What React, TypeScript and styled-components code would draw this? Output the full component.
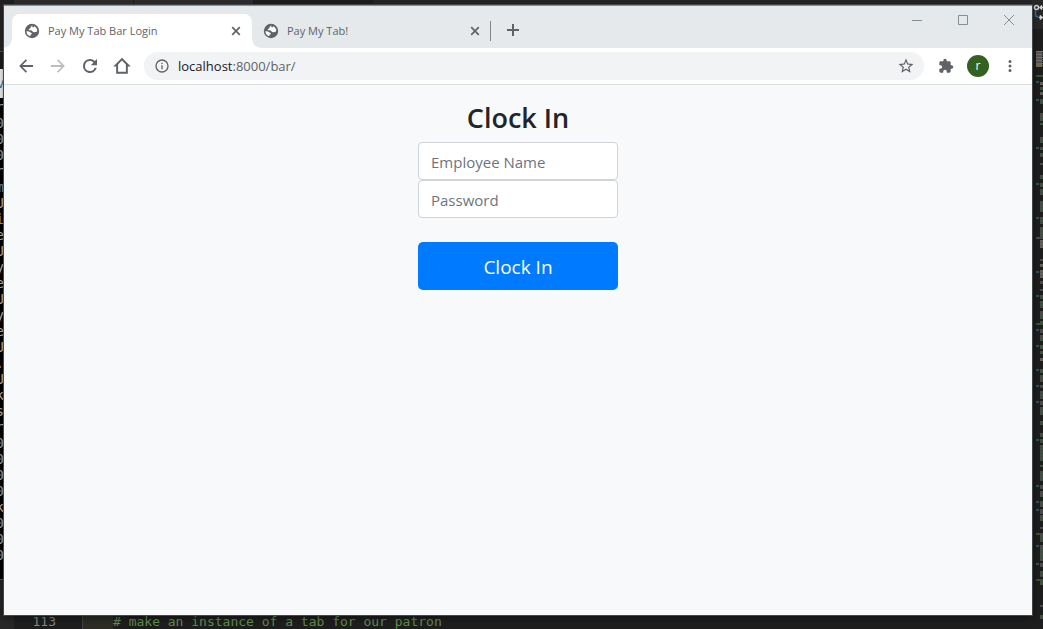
import React from 'react';
import styled, { createGlobalStyle } from 'styled-components';

const GlobalStyle = createGlobalStyle`
  *, *::before, *::after { box-sizing: border-box; }
  body { margin: 0; background: #1e1e1e; font-family: "Segoe UI", "Open Sans", "Noto Sans", sans-serif; }
  button, input { font-family: inherit; }
`;

const Desktop = styled.div`
  display: grid;
  grid-template-columns: 4px minmax(0, 1fr) 11px;
  grid-template-rows: 5px minmax(0, 1fr) 14px;
  grid-template-areas: 'top top map' 'term window map' 'code code map';
  height: 100vh;
  background: #1e1e1e;
`;

const EditorTabs = styled.div`
  grid-area: top;
  display: flex;
  background: #252526;
`;

const EditorTab = styled.div<{ $width: number; $color: string }>`
  width: ${p => p.$width}px;
  background: ${p => p.$color};
  border-right: 1px solid #1c1c1c;
`;

const Terminal = styled.div`
  grid-area: term;
  overflow: hidden;
  display: flex;
  flex-direction: column;
  background: #252526;
`;

const TerminalTop = styled.div`
  height: 64px;
  flex: none;
  background: linear-gradient(#252526 46px, #555 46px, #555 47px, #1e1e1e 47px);
`;

const TerminalTitle = styled.div`
  height: 29px;
  flex: none;
  background: #f3f3f3;
  color: #4a6fa5;
  font: 14px/29px "Liberation Sans", sans-serif;
  display: flex;
  justify-content: flex-end;
`;

const TerminalBody = styled.div`
  background: #000;
  border-bottom: 1px solid #555;
  padding: 1px 0 16px;
`;

const TerminalRow = styled.div<{ $color: string }>`
  display: flex;
  justify-content: flex-end;
  color: ${p => p.$color};
  font: 14px/16px "DejaVu Sans Mono", monospace;
`;

const CodeLine = styled.div`
  grid-area: code;
  overflow: hidden;
  display: grid;
  grid-template-columns: 56px 26px 31px 1fr;
  background: linear-gradient(90deg, #272727 14px, #1e1e1e 14px);
  font: 13px/14px "DejaVu Sans Mono", monospace;
  white-space: pre;
`;

const LineNumber = styled.span`
  color: #858585;
  text-align: right;
`;

const IndentGuide = styled.span`
  grid-column: 3;
  background: #2d2d26;
  border-left: 1px solid #404040;
`;

const Comment = styled.span`
  color: #5f8f4c;
`;

const MinimapPane = styled.div`
  grid-area: map;
  overflow: hidden;
  background: #1e1e1e;
  svg { display: block; }
`;

const BrowserWindow = styled.div`
  grid-area: window;
  display: flex;
  flex-direction: column;
  background: #f8f9fa;
  border-top: 1px solid #8a8d91;
  box-shadow: 0 0 0 1px #45484a, 0 2px 8px rgba(0, 0, 0, 0.5);
  z-index: 1;
`;

const TabStrip = styled.div`
  display: flex;
  height: 42px;
  flex: none;
  padding: 8px 0 0 8px;
  background: #e5e9ec;
`;

const Tab = styled.div<{ $active?: boolean }>`
  position: relative;
  display: flex;
  align-items: center;
  width: 240px;
  height: 34px;
  margin-right: -1px;
  padding: 0 9px 0 12px;
  border-radius: 8px 8px 0 0;
  background: ${p => (p.$active ? '#fff' : 'transparent')};
  color: #5f6368;

  &::before, &::after {
    content: '';
    display: ${p => (p.$active ? 'block' : 'none')};
    position: absolute;
    bottom: 0;
    width: 8px;
    height: 8px;
  }
  &::before { left: -8px; background: radial-gradient(circle at 0 0, transparent 7px, #fff 8px); }
  &::after { right: -8px; background: radial-gradient(circle at 100% 0, transparent 7px, #fff 8px); }
`;

const TabTitle = styled.span`
  flex: 1;
  margin-left: 8px;
  font-size: 11px;
  line-height: 16px;
  white-space: nowrap;
`;

const IconButton = styled.button<{ $size?: number }>`
  display: grid;
  place-items: center;
  flex: none;
  width: ${p => p.$size ?? 32}px;
  height: ${p => p.$size ?? 32}px;
  padding: 0;
  border: 0;
  background: none;
  color: #5f6368;
  &:disabled { color: #bdbdbd; }
  svg { display: block; }
`;

const TabSeparator = styled.span`
  width: 1px;
  height: 20px;
  margin: 7px 6px 0 0;
  background: #80868b;
`;

const WindowControls = styled.div`
  display: flex;
  margin: -8px 0 0 auto;
  height: 28px;
`;

const WindowButton = styled.button`
  display: grid;
  place-items: center;
  width: 46px;
  padding: 0;
  border: 0;
  background: none;
  color: #84908f;
`;

const Toolbar = styled.div`
  display: flex;
  align-items: center;
  height: 37px;
  flex: none;
  padding: 0 6px;
  background: #fff;
  border-bottom: 1px solid #dadce0;
`;

const AddressBar = styled.div`
  display: flex;
  align-items: center;
  flex: 1;
  min-width: 0;
  height: 28px;
  margin: 0 6px;
  padding: 0 2px 0 10px;
  border-radius: 14px;
  background: #f1f3f4;
  color: #5f6368;
`;

const Address = styled.span`
  flex: 1;
  margin-left: 8px;
  font-size: 13px;
  line-height: 20px;
  white-space: nowrap;
  b { font-weight: 400; color: #202124; }
`;

const Avatar = styled.button`
  width: 22px;
  height: 22px;
  margin: 0 5px;
  padding: 0 0 1px;
  border: 0;
  border-radius: 50%;
  background: #33611f;
  color: #fff;
  font-size: 12px;
  line-height: 20px;
`;

const Page = styled.main`
  flex: 1;
  padding-top: 16px;
`;

const LoginForm = styled.form`
  display: flex;
  flex-direction: column;
  width: 200px;
  margin: 0 auto;
`;

const Title = styled.h1`
  margin: 0 0 8px;
  color: #212529;
  font-size: 27px;
  font-weight: 600;
  line-height: 33px;
  text-align: center;
`;

const TextField = styled.input`
  width: 100%;
  height: 38px;
  padding: 7px 12px 5px;
  border: 1px solid #ced4da;
  border-radius: 4px;
  background: #fff;
  color: #495057;
  font-size: 15px;
  line-height: 24px;
  &::placeholder { color: #6c757d; opacity: 1; }
`;

const SubmitButton = styled.button`
  height: 48px;
  margin-top: 24px;
  padding: 2px 16px 0;
  border: 0;
  border-radius: 5px;
  background: #007bff;
  color: #fff;
  font-size: 19px;
  line-height: 30px;
`;

const GlobeIcon = () => (
  <svg width="16" height="16" viewBox="0 0 16 16" aria-hidden="true">
    <circle cx="8" cy="8" r="7.2" fill="#5f6368" />
    <path d="M8.6 2.2c-.9.7-2.2 1.5-2.2 2.7 0 .8-1.7.4-1.7 1.5 0 .9 1 .9 2.2.9 1.400 0 1.500 1.900 2.900 1.900 1 0 1.600-.8 3.400-.8a5.500 5.500 0 0 0-2.800-5.200c-.3.8-1.400 1.200-2.300.9z M2.400 8.300c1.600 0 2.700-.1 3.600.9.6.7 1.800.3 1.800 1.300 0 1.100-1.600.9-1.600 2.800a5.700 5.700 0 0 1-3.800-5z" fill="#fff" />
  </svg>
);

const CloseIcon = () => (
  <svg width="10" height="10" viewBox="0 0 10 10" stroke="currentColor" strokeWidth="1.7" aria-hidden="true">
    <path d="M1.200 1.200l7.600 7.600M8.800 1.200L1.200 8.800" />
  </svg>
);

const MaterialIcon = ({ d, size = 20 }: { d: string; size?: number }) => (
  <svg width={size} height={size} viewBox="0 0 24 24" fill="currentColor" aria-hidden="true">
    <path d={d} />
  </svg>
);

const icons = {
  back: 'M20.500 10.800H7.830l5.390-5.390L11.800 4l-8 8 8 8 1.410-1.410L7.830 13.200h12.670v-2.400z',
  forward: 'M12.200 4l-1.410 1.410 5.380 5.390H3.500v2.400h12.670l-5.380 5.390L12.200 20l8-8z',
  reload: 'M17.900 6.100A8.400 8.400 0 0 0 12 3.600a8.400 8.400 0 1 0 8.100 10.600h-2.500A6 6 0 1 1 12 6c1.660 0 3.140.69 4.220 1.780L13 11h7.400V3.600l-2.500 2.500z',
  home: 'M12 2L1.500 12.500H5V21.400h14v-8.900h3.500L12 2zm4.700 17H7.300v-8.900l4.700-4.800 4.700 4.800V19z',
  info: 'M11 17h2v-6h-2v6zm1-15a10 10 0 1 0 0 20 10 10 0 0 0 0-20zm0 18a8 8 0 1 1 0-16 8 8 0 0 1 0 16zM11 9h2V7h-2v2z',
  star: 'M22 9.240l-7.190-.62L12 2 9.190 8.630 2 9.240l5.460 4.730L5.820 21 12 17.270 18.180 21l-1.630-7.030L22 9.240zM12 15.400l-3.760 2.270 1-4.280-3.320-2.880 4.380-.38L12 6.100l1.710 4.040 4.380.38-3.320 2.880 1 4.280L12 15.400z',
  puzzle: 'M20.500 11H19V7c0-1.100-.9-2-2-2h-4V3.500a2.500 2.500 0 0 0-5 0V5H4c-1.100 0-1.990.9-1.990 2v3.800H3.500a2.700 2.700 0 0 1 0 5.400H2V20c0 1.100.9 2 2 2h3.800v-1.500a2.700 2.700 0 0 1 5.400 0V22H17c1.100 0 2-.9 2-2v-4h1.500a2.500 2.500 0 0 0 0-5z',
  more: 'M12 8a2 2 0 1 0 0-4 2 2 0 0 0 0 4zm0 2a2 2 0 1 0 0 4 2 2 0 0 0 0-4zm0 6a2 2 0 1 0 0 4 2 2 0 0 0 0-4z',
};

const terminalChars = 'r000rmUieUyeUyeU.Uksr0000k000'.split('');
const terminalColor = (c: string) => (c === '0' ? '#8fb2dc' : c === 'm' ? '#6a9fd8' : c === 'i' ? '#a8a860' : '#c4bcae');

const markers = [81, 99, 147, 183, 217, 271, 295, 329, 345, 369, 385, 401, 439, 485, 501, 509, 545, 563];
const codeBlocks: [number, number][] = [
  [82, 3], [87, 3], [92, 3], [99, 5], [113, 8], [123, 2], [137, 6], [147, 3], [153, 4], [163, 2],
  [175, 4], [183, 4], [189, 6], [201, 11], [217, 7], [227, 11], [240, 8], [259, 2], [264, 3],
  [270, 8], [281, 3], [289, 2], [295, 4], [301, 7], [311, 8], [321, 2], [329, 4], [335, 6],
  [345, 4], [351, 3], [358, 3], [369, 4], [375, 7], [385, 3], [391, 8], [401, 4], [407, 8],
  [421, 4], [433, 4], [439, 4], [445, 16], [465, 2], [471, 10], [485, 4], [491, 6], [501, 6],
  [509, 5], [515, 6], [527, 2], [533, 9], [545, 16], [563, 4], [571, 6], [581, 4], [605, 2], [615, 4],
];
const codeColors = ['#606060', '#4a4f4b', '#6b6459', '#3c5542', '#555555', '#444444'];

const Minimap = () => (
  <svg width="11" height="629" viewBox="0 0 11 629" aria-hidden="true">
    <path fill="#29292a" d="M0 0h11v29H0z" />
    <g fill="none" strokeWidth="1.500">
      <circle cx="4.500" cy="7.500" r="2" stroke="#d4d4d4" />
      <path d="M8 7.500h3M10 5.500l-2 2 2 2M7 17.500h4M8 15.500l2 2-2 2" stroke="#d4d4d4" />
      <path d="M3.500 10v6l3 1" stroke="#4068a8" />
    </g>
    {Array.from({ length: 16 }, (_, y) => (
      <path key={y} fill={y > 11 ? '#756d42' : y % 3 ? '#5a5552' : '#78736e'} d={`M4 ${51 + y}h${y % 2 ? 6 : 7}v1H4z`} />
    ))}
    <path fill="#39532f" d="M4 75h7v2H4zM4 323h7v2H4zM4 533h7v2H4zM4 579h7v2H4z" />
    <path fill="#4a4a4a" d="M4 237h7v2H4z" />
    {markers.map(y => <path key={y} fill="#2f5260" d={`M4 ${y}h3v2H4z`} />)}
    {codeBlocks.map(([top, height]) =>
      Array.from({ length: height }, (_, i) => {
        const y = top + i;
        return (
          <g key={y}>
            <path fill={codeColors[(y * 7 + i) % 6]} d={`M8 ${y}h1v1h-1z`} />
            <path fill={codeColors[(y * 5 + i) % 6]} d={`M9 ${y}h1v1h-1z`} />
            <path fill={codeColors[(y + i * 3 + 2) % 6]} d={`M10 ${y}h1v1h-1z`} />
          </g>
        );
      }),
    )}
  </svg>
);

export default function App() {
  return (
    <Desktop>
      <GlobalStyle />
      <EditorTabs>
        <EditorTab $width={14} $color="#202020" />
        <EditorTab $width={120} $color="#2d2d2d" />
        <EditorTab $width={120} $color="#2d2d2d" />
        <EditorTab $width={119} $color="#1e1e1e" />
      </EditorTabs>
      <Terminal aria-hidden="true">
        <TerminalTop />
        <TerminalTitle>v</TerminalTitle>
        <TerminalBody>
          {terminalChars.map((c, i) => <TerminalRow key={i} $color={terminalColor(c)}>{c}</TerminalRow>)}
        </TerminalBody>
      </Terminal>

      <BrowserWindow>
        <TabStrip>
          <Tab $active>
            <GlobeIcon />
            <TabTitle>Pay My Tab Bar Login</TabTitle>
            <IconButton $size={14} aria-label="Close tab"><CloseIcon /></IconButton>
          </Tab>
          <Tab>
            <GlobeIcon />
            <TabTitle>Pay My Tab!</TabTitle>
            <IconButton $size={14} aria-label="Close tab"><CloseIcon /></IconButton>
          </Tab>
          <TabSeparator />
          <IconButton aria-label="New tab">
            <svg width="12" height="12" viewBox="0 0 12 12" stroke="currentColor" strokeWidth="2"><path d="M6 0v12M0 6h12" /></svg>
          </IconButton>
          <WindowControls>
            <WindowButton aria-label="Minimize">
              <svg width="10" height="10" viewBox="0 0 10 10" stroke="currentColor"><path d="M0 5.500h10" /></svg>
            </WindowButton>
            <WindowButton aria-label="Maximize">
              <svg width="10" height="10" viewBox="0 0 10 10" stroke="currentColor" fill="none"><path d="M.5.5h9v9h-9z" /></svg>
            </WindowButton>
            <WindowButton aria-label="Close">
              <svg width="10" height="10" viewBox="0 0 10 10" stroke="currentColor"><path d="M0 0l10 10M10 0L0 10" /></svg>
            </WindowButton>
          </WindowControls>
        </TabStrip>
        <Toolbar>
          <IconButton aria-label="Back"><MaterialIcon d={icons.back} /></IconButton>
          <IconButton aria-label="Forward" disabled><MaterialIcon d={icons.forward} /></IconButton>
          <IconButton aria-label="Reload"><MaterialIcon d={icons.reload} /></IconButton>
          <IconButton aria-label="Home"><MaterialIcon d={icons.home} /></IconButton>
          <AddressBar>
            <MaterialIcon d={icons.info} size={16} />
            <Address><b>localhost</b>:8000/bar/</Address>
            <IconButton aria-label="Bookmark this page"><MaterialIcon d={icons.star} size={18} /></IconButton>
          </AddressBar>
          <IconButton aria-label="Extensions"><MaterialIcon d={icons.puzzle} size={16} /></IconButton>
          <Avatar aria-label="Profile r">r</Avatar>
          <IconButton aria-label="Menu"><MaterialIcon d={icons.more} size={18} /></IconButton>
        </Toolbar>
        <Page>
          <LoginForm onSubmit={e => e.preventDefault()}>
            <Title>Clock In</Title>
            <TextField type="text" placeholder="Employee Name" aria-label="Employee Name" />
            <TextField type="password" placeholder="Password" aria-label="Password" />
            <SubmitButton type="submit">Clock In</SubmitButton>
          </LoginForm>
        </Page>
      </BrowserWindow>

      <CodeLine>
        <LineNumber>113</LineNumber>
        <IndentGuide />
        <Comment># make an instance of a tab for our patron</Comment>
      </CodeLine>
      <MinimapPane><Minimap /></MinimapPane>
    </Desktop>
  );
}
